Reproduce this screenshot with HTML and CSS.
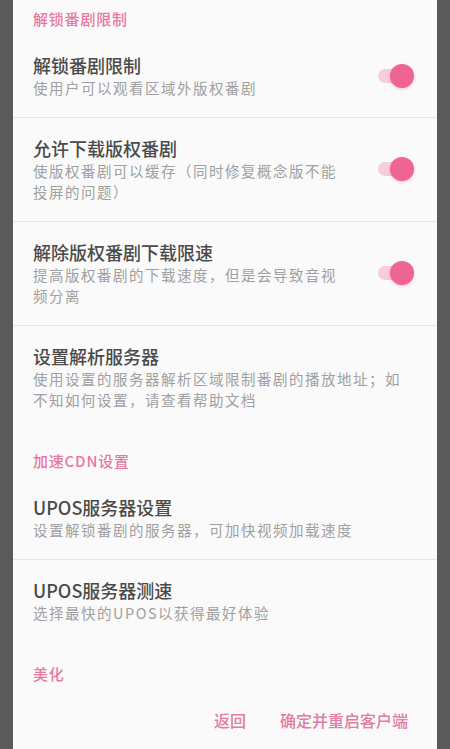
FILE: index.html
```html
<!DOCTYPE html>
<html lang="zh-CN">
<head>
    <meta charset="UTF-8">
    <meta name="viewport" content="width=device-width, initial-scale=1.0">
    <title>设置</title>
    <link rel="stylesheet" href="styles.css">
</head>
<body>
    <div class="dialog">
        <div class="list">
            <div class="section first">解锁番剧限制</div>

            <div class="item divided">
                <div class="text">
                    <div class="title">解锁番剧限制</div>
                    <div class="summary">使用户可以观看区域外版权番剧</div>
                </div>
                <div class="switch"><span class="knob"></span></div>
            </div>

            <div class="item divided">
                <div class="text">
                    <div class="title">允许下载版权番剧</div>
                    <div class="summary">使版权番剧可以缓存（同时修复概念版不能投屏的问题）</div>
                </div>
                <div class="switch"><span class="knob"></span></div>
            </div>

            <div class="item divided">
                <div class="text">
                    <div class="title">解除版权番剧下载限速</div>
                    <div class="summary">提高版权番剧的下载速度，但是会导致音视频分离</div>
                </div>
                <div class="switch"><span class="knob"></span></div>
            </div>

            <div class="item">
                <div class="text">
                    <div class="title">设置解析服务器</div>
                    <div class="summary">使用设置的服务器解析区域限制番剧的播放地址；如不知如何设置，请查看帮助文档</div>
                </div>
            </div>

            <div class="section">加速CDN设置</div>

            <div class="item divided">
                <div class="text">
                    <div class="title">UPOS服务器设置</div>
                    <div class="summary">设置解锁番剧的服务器，可加快视频加载速度</div>
                </div>
            </div>

            <div class="item">
                <div class="text">
                    <div class="title">UPOS服务器测速</div>
                    <div class="summary">选择最快的UPOS以获得最好体验</div>
                </div>
            </div>

            <div class="section">美化</div>
        </div>

        <div class="actions">
            <button class="action">返回</button>
            <button class="action">确定并重启客户端</button>
        </div>
    </div>
</body>
</html>
```

FILE: styles.css
```css
body {
    margin: 0;
    height: 749px;
    overflow: hidden;
    background-color: #5a5a5a;
    font-family: "Noto Sans CJK SC", "Noto Sans", sans-serif;
}
.dialog {
    margin: 0 13px;
    height: 749px;
    background: #fafafa;
    display: flex;
    flex-direction: column;
}
.list {
    flex: 1;
    overflow: hidden;
}
.section {
    margin-top: 13px;
    padding: 8px 20px 5px;
    line-height: 22px;
    font-size: 15px;
    font-weight: 500;
    letter-spacing: 0.8px;
    color: #e8789f;
}
.section.first {
    margin-top: 0;
}
.item {
    display: flex;
    align-items: center;
    gap: 30px;
    padding: 18px 27px 19px 20px;
}
.item.divided {
    border-bottom: 1px solid #e4e4e4;
}
.text {
    flex: 1;
    max-width: 375px;
}
.title {
    font-size: 18px;
    line-height: 24px;
    font-weight: 500;
    color: #4a4a4a;
}
.summary {
    font-size: 14.5px;
    line-height: 21px;
    letter-spacing: 1.5px;
    color: #a0a0a0;
}
.switch {
    width: 32px;
    height: 14px;
    border-radius: 7px;
    background: #f7cddc;
    display: flex;
    align-items: center;
    justify-content: flex-end;
    flex-shrink: 0;
}
.knob {
    width: 24px;
    height: 24px;
    border-radius: 50%;
    background: #ee6592;
    margin-right: -4px;
    flex-shrink: 0;
    box-shadow: 0 1px 3px rgba(230, 80, 130, 0.35);
}
.actions {
    display: flex;
    justify-content: flex-end;
    gap: 34px;
    padding: 8px 29px 17px 0;
}
.action {
    border: none;
    background: none;
    padding: 0;
    font-family: inherit;
    font-size: 16px;
    line-height: 24px;
    font-weight: 500;
    color: #e47ba3;
}
```
